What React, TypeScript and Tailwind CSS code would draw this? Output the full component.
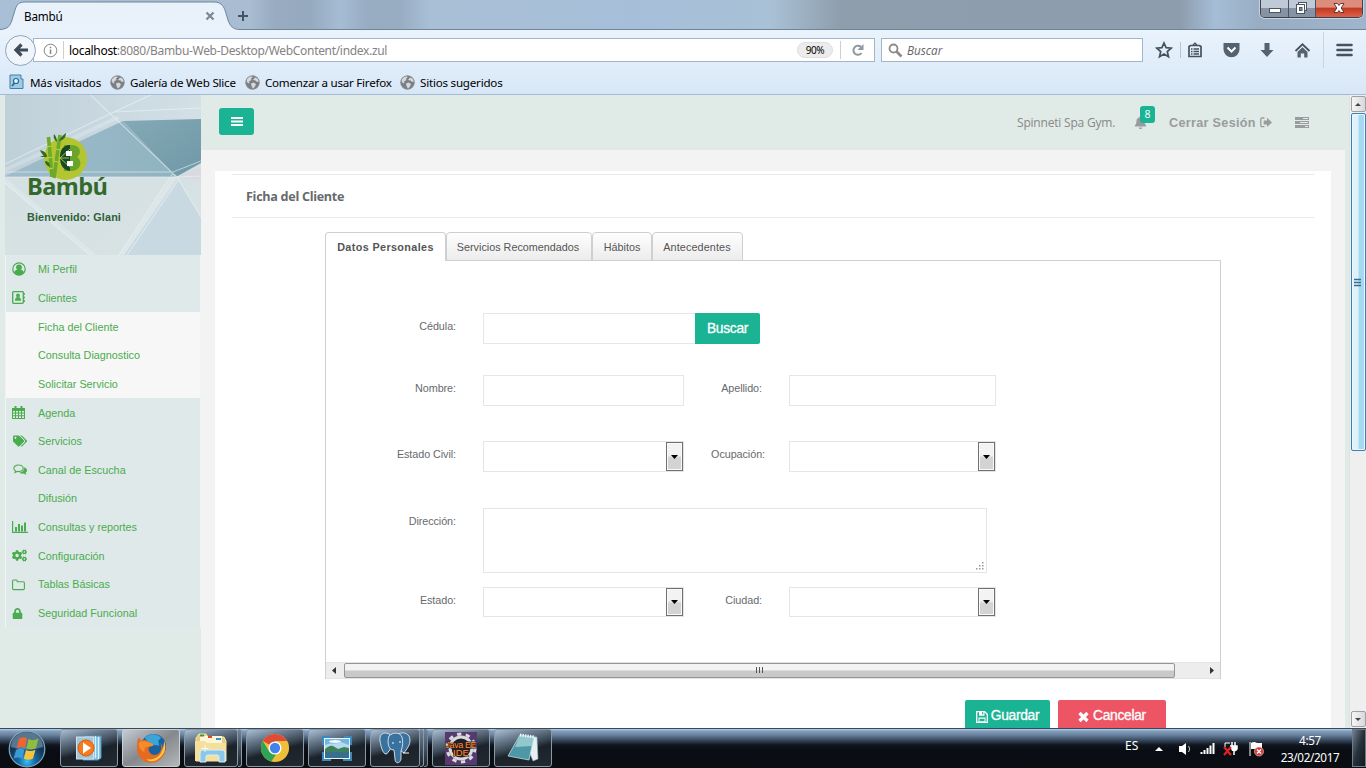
import React from "react";
import { FaBell, FaCogs, FaLock, FaTags } from "react-icons/fa";

const FORM_FONT = "font-['Liberation_Sans',Arial,sans-serif]";
const UI_FONT = "font-['Noto_Sans','Open_Sans',sans-serif]";

function Globe() {
  return (
    <svg width="15" height="15" viewBox="0 0 15 15" className="shrink-0">
      <circle cx="7.5" cy="7.5" r="7" fill="#7b7e82" />
      <path d="M1.5 6C2 3 4 1.5 6 1.2L8 2 6 3.5 6.5 5 4 6.5 4.5 8.5 2.8 8zM8 5l2-2.5 2.5 1L14 6.5l-2 .5-1.5-1.5zM6 8.5l2.500-1 2.500 1.500-1 2.500-2 2.300L6.500 11z" fill="#d5d8dc" />
      <circle cx="7.5" cy="7.5" r="6.8" fill="none" stroke="#8f9398" strokeWidth=".6" />
    </svg>
  );
}

function WindowButtons() {
  return (
    <div className="flex h-[18px] w-[103px] self-start overflow-hidden rounded-b-[5px] border border-t-0 border-[#39424f] shadow-[0_0_0_1px_#c6d2de]">
      <div className="flex w-[28px] items-center justify-center border-r border-[#4a5360] bg-linear-to-b from-[#c0cad6] from-45% to-[#8593a5] to-50%">
        <svg width="14" height="14"><rect x="1.5" y="6.5" width="11" height="4" fill="#fff" stroke="#4b5462" /></svg>
      </div>
      <div className="flex w-[27px] items-center justify-center border-r border-[#4a5360] bg-linear-to-b from-[#c0cad6] from-45% to-[#8593a5] to-50%">
        <svg width="14" height="14" fill="none" className="-mt-[2px]">
          <rect x="3.500" y="1.500" width="8" height="8" fill="#fff" stroke="#4b5462" />
          <rect x="1.500" y="3.500" width="8" height="9" fill="#fff" stroke="#4b5462" />
          <rect x="4.500" y="6.500" width="2.500" height="3" fill="#8593a5" stroke="#4b5462" />
        </svg>
      </div>
      <div className="flex flex-1 items-center justify-center bg-linear-to-b from-[#dc8d7c] from-40% via-[#c23a22] via-50% to-[#dd6048]">
        <svg width="14" height="14" viewBox="0 0 14 14" className="-mt-px">
          <path d="M2 2.500h3.500L7 4.500l1.500-2H12L9.200 7l2.800 4.500H8.500L7 9.500l-1.500 2H2L4.800 7z" fill="#fff" stroke="#5b3a3a" />
        </svg>
      </div>
    </div>
  );
}

function TabStrip() {
  return (
    <div className="relative flex h-[30px] shrink-0 justify-end bg-[linear-gradient(90deg,#a8bfd6_0,#a8bdd2_250px,#98abc0_275px,#96aabf_310px,#a5bcd4_340px,#97abc1_370px,#98adc2_400px,#a9bfd6_430px,#a6bed8_640px,#a9c1d6_770px,#8f9ead_840px,#8e9dae_1180px,#a5bdd6_1215px,#98adc2_1260px,#9fb5cd_1366px)] pr-[3px]">
      <svg width="260" height="30" viewBox="0 0 260 30" className="absolute left-0 top-0">
        <path d="M0 30V29.500C8 29 10 26 12 20L15 10C17 4 19 2 25 2H214C220 2 223 5 225 10L228 20C230 26 233 29.500 240 29.500V30z" fill="#e9f2fb" />
        <path d="M0 29.500C8 29 10 26 12 20L15 10C17 4 19 2 25 2H214C220 2 223 5 225 10L228 20C230 26 233 29.500 240 29.500H260" fill="none" stroke="#6f8699" />
        <path d="M206.500 12.500l7 7m0-7l-7 7" stroke="#7c8793" strokeWidth="2.200" />
        <path d="M238 16h10M243 11v10" stroke="#45525f" strokeWidth="2" />
      </svg>
      <span className={`absolute left-[24px] top-[7px] text-[11.700px] leading-[18px] tracking-[-0.200px] text-black ${UI_FONT}`}>Bambú</span>
      <div className="absolute bottom-0 left-[240px] right-0 h-px bg-[#6f8699]" />
      <WindowButtons />
    </div>
  );
}

function Toolbar() {
  return (
    <div className={`flex h-[40px] shrink-0 items-center pl-[5px] ${UI_FONT}`}>
      <div className="z-10 flex h-[31px] w-[31px] shrink-0 items-center justify-center rounded-full border border-[#8ea4ba] bg-[#eff5fb]">
        <svg width="16" height="16" viewBox="0 0 16 16"><path d="M8.500 2.500L3 8l5.500 5.500M3 8h12" stroke="#3f4b57" strokeWidth="3.200" fill="none" /></svg>
      </div>
      <div className="-ml-[3px] flex h-[24px] w-[842px] items-center border border-[#a3b6c9] bg-white pl-[9px]">
        <svg width="15" height="15" viewBox="0 0 15 15" className="shrink-0"><circle cx="7.500" cy="7.500" r="6.300" fill="none" stroke="#858585" /><path d="M7.500 6.500v4.500M7.500 3.700v1.500" stroke="#858585" strokeWidth="1.500" /></svg>
        <div className="mx-[5px] h-[18px] w-px bg-[#cfcfcf]" />
        <span className="pt-[2px] text-[12px] leading-[18px] tracking-[-0.320px] text-[#838383]"><span className="text-black">localhost</span>:8080/Bambu-Web-Desktop/WebContent/index.zul</span>
        <span className="ml-auto mr-[-1px] flex h-[16px] w-[36px] items-center justify-center rounded-full border border-[#dedede] bg-[#ececec] text-[10px] tracking-[-0.400px]">90%</span>
        <div className="ml-[8px] h-[18px] w-px bg-[#cfcfcf]" />
        <svg width="14" height="14" viewBox="0 0 14 14" className="ml-[10px] mr-[9px]"><path d="M10.500 10A4.500 4.500 0 1 1 10 4" fill="none" stroke="#8d98a3" strokeWidth="2" /><path d="M12.500 1v6h-6z" fill="#8d98a3" /></svg>
      </div>
      <div className="ml-[6px] flex h-[24px] w-[262px] items-center border border-[#a3b6c9] bg-white pl-[6px]">
        <svg width="15" height="15" viewBox="0 0 15 15"><circle cx="5.500" cy="5.500" r="4" fill="none" stroke="#8b8b8b" strokeWidth="1.800" /><path d="M8.500 8.500l5 5" stroke="#8b8b8b" strokeWidth="2.600" /></svg>
        <span className="ml-[4px] pt-[2px] font-['Open_Sans','Noto_Sans',sans-serif] text-[11.700px] italic text-[#666]">Buscar</span>
      </div>
      <svg width="18" height="18" viewBox="0 0 18 18" className="ml-[12px]"><path d="M9 2l2.100 4.700 5 .5-3.800 3.400 1.200 5.100L9 13l-4.500 2.700 1.200-5.100L1.900 7.200l5-.5z" fill="none" stroke="#45525f" strokeWidth="1.700" /></svg>
      <div className="ml-[7px] h-[16px] w-px bg-[#b5c4d4]" />
      <svg width="16" height="16" viewBox="0 0 16 16" className="ml-[6px]"><path d="M2 4.500l1.500-1h9L14 4.500V14.500H2z" fill="none" stroke="#45525f" strokeWidth="1.700" /><path d="M6 3L8 1.200 10 3M4 7h1.500m1 0H12M4 9.500h1.500m1 0H12M4 12h1.500m1 0H12" fill="none" stroke="#45525f" strokeWidth="1.300" /></svg>
      <svg width="17" height="16" viewBox="0 0 17 16" className="ml-[20px]"><path d="M.5 1h16v6.500a8 7.800 0 0 1-16 0z" fill="#55626f" /><path d="M4.500 5.500l4 4 4-4" fill="none" stroke="#fff" strokeWidth="2" /></svg>
      <svg width="16" height="16" viewBox="0 0 16 16" className="ml-[19px]"><path d="M5.500 1h5v7h4L8 15 1.500 8h4z" fill="#55626f" /></svg>
      <svg width="17" height="16" viewBox="0 0 17 16" className="ml-[19px]"><path d="M1.500 9l7-6.700 7 6.700" fill="none" stroke="#45525f" strokeWidth="1.800" /><path d="M3.500 10l5-4.800 5 4.800v5.500h-3.300v-4H6.800v4H3.500z" fill="#55626f" /></svg>
      <div className="ml-[12px] h-[36px] w-px bg-[#c7d5e5]" />
      <svg width="17" height="16" viewBox="0 0 17 16" className="ml-[12px]"><path d="M1.500 3h14M1.500 8h14M1.500 13h14" stroke="#45525f" strokeWidth="2.600" strokeLinecap="round" /></svg>
    </div>
  );
}

function Bookmarks() {
  return (
    <div className={`flex flex-1 items-center pl-[9px] text-[11.600px] leading-[18px] text-black ${UI_FONT}`}>
      <svg width="16" height="16" viewBox="0 0 16 16" className="mr-[5px]"><path d="M1 1h11v4h2v9.500H1z" fill="#9ecbe5" stroke="#467fa5" /><circle cx="7" cy="7" r="2.500" fill="#e8f6ff" stroke="#286993" strokeWidth="1.200" /><path d="M5.500 9L3 12" stroke="#286993" strokeWidth="1.800" /></svg>
      <span className="w-[80px] whitespace-nowrap pt-[2px] tracking-[-0.180px]">Más visitados</span>
      <Globe />
      <span className="ml-[4px] w-[116px] whitespace-nowrap pt-[2px] pl-px tracking-[-0.220px]">Galería de Web Slice</span>
      <Globe />
      <span className="ml-[5px] w-[135px] whitespace-nowrap pt-[2px] tracking-[-0.240px]">Comenzar a usar Firefox</span>
      <Globe />
      <span className="ml-[5px] whitespace-nowrap pt-[2px] tracking-[-0.220px]">Sitios sugeridos</span>
    </div>
  );
}

const menuIcons: Record<string, React.ReactNode> = {
  perfil: <svg width="14" height="14" viewBox="0 0 14 14"><circle cx="7" cy="7" r="6.200" fill="none" stroke="currentColor" strokeWidth="1.200" /><circle cx="7" cy="5.300" r="2.900" fill="currentColor" /><path d="M2 10.500C2.700 8.500 4 8 5 7.800h4c1 .2 2.300.7 3 2.700A6 6 0 0 1 2 10.500z" fill="currentColor" /></svg>,
  clientes: <svg width="14" height="13" viewBox="0 0 14 13"><rect x=".7" y=".7" width="10.600" height="11.600" rx=".8" fill="none" stroke="currentColor" strokeWidth="1.300" /><circle cx="6" cy="4.500" r="1.900" fill="currentColor" /><path d="M3 9.800c0-2 .8-3.500 2-3.500h2c1.200 0 2 1.500 2 3.500z" fill="currentColor" /><path d="M12.300 2v2m0 1.500v2m0 1.500v2" stroke="currentColor" /></svg>,
  agenda: <svg width="13" height="13" viewBox="0 0 13 13"><path d="M0 2h13v11H0z" fill="currentColor" /><path d="M1 5h2v1.600H1zM4 5h2v1.600H4zM7 5h2v1.600H7zM10 5h2v1.600h-2zM1 7.600h2v1.600H1zM4 7.600h2v1.600H4zM7 7.600h2v1.600H7zM10 7.600h2v1.600h-2zM1 10.200h2V12H1zM4 10.200h2V12H4zM7 10.200h2V12H7zM10 10.200h2V12h-2z" fill="#e1eaea" /><path d="M3.500 0v3.500M9.500 0v3.500" stroke="currentColor" strokeWidth="2" /></svg>,
  servicios: <FaTags size={14} className="ml-px" />,
  canal: <svg width="14" height="12" viewBox="0 0 14 12" className="ml-px"><path d="M5.500 1C2.800 1 .8 2.400.8 4.300c0 1.100.7 2 1.700 2.600L2 8.500l2.300-1.100 1.200.1c2.700 0 4.700-1.400 4.700-3.200S8.200 1 5.500 1z" fill="none" stroke="currentColor" strokeWidth="1.100" /><path d="M11.300 3.200C13 3.800 14 5 14 6.300c0 1-.5 1.900-1.500 2.600l1 2-3-1.300c-1.800.2-3.600-.2-4.700-1 3.500 0 5.700-2.100 5.500-5.400z" fill="currentColor" /></svg>,
  reportes: <svg width="16" height="12" viewBox="0 0 16 12"><path d="M.6 0v11.400H16" fill="none" stroke="currentColor" strokeWidth="1.200" /><path d="M4 6v4.500M7 3v7.500M10 4.500v6M13 1.500v9" stroke="currentColor" strokeWidth="2" /></svg>,
  config: <FaCogs size={15} />,
  tablas: <svg width="13" height="12" viewBox="0 0 13 12"><path d="M.6 2.200Q.6 1 1.800 1h2.400q1 0 1 1v.7h6q1.200 0 1.200 1.200v5.500q0 1.200-1.200 1.200H1.800q-1.200 0-1.200-1.200z" fill="none" stroke="currentColor" strokeWidth="1.100" /></svg>,
  seguridad: <FaLock size={11} />,
};

const menu = [
  { label: "Mi Perfil", icon: "perfil" },
  { label: "Clientes", icon: "clientes" },
  { label: "Ficha del Cliente", sub: true },
  { label: "Consulta Diagnostico", sub: true },
  { label: "Solicitar Servicio", sub: true },
  { label: "Agenda", icon: "agenda" },
  { label: "Servicios", icon: "servicios" },
  { label: "Canal de Escucha", icon: "canal" },
  { label: "Difusión" },
  { label: "Consultas y reportes", icon: "reportes" },
  { label: "Configuración", icon: "config" },
  { label: "Tablas Básicas", icon: "tablas" },
  { label: "Seguridad Funcional", icon: "seguridad" },
];

function SidebarArt() {
  return (
    <svg width="196" height="160" viewBox="0 0 196 160" className="absolute inset-0">
      <defs>
        <linearGradient id="sky" x1="0" y1="0" x2="1" y2="0"><stop offset="0" stopColor="#bfd0d9" /><stop offset="1" stopColor="#d3e0e6" /></linearGradient>
        <linearGradient id="band" x1="0" y1="0" x2="1" y2="0"><stop offset="0" stopColor="#9fbccb" /><stop offset="1" stopColor="#8fb3c0" /></linearGradient>
        <linearGradient id="deep" x1="0" y1="0" x2="1" y2="1"><stop offset="0" stopColor="#85a9b6" /><stop offset="1" stopColor="#6f98a6" /></linearGradient>
        <linearGradient id="low" x1="0" y1="0" x2="1" y2="1"><stop offset="0" stopColor="#c6d7de" /><stop offset="1" stopColor="#dbe4e6" /></linearGradient>
      </defs>
      <rect width="196" height="160" fill="url(#low)" />
      <path d="M0 0h196v25L118 26 0 81z" fill="url(#sky)" />
      <path d="M0 81L118 26l53 56H0z" fill="url(#band)" />
      <path d="M118 26l78-2v44l-25 14z" fill="url(#deep)" />
      <path d="M173 84l23 38v38h-77z" fill="#c9d9e1" />
      <path d="M0 82h173l-54 78H0z" fill="#d7e1e3" opacity=".75" />
      <path d="M171 82l25-10v13z" fill="#d9d9e0" />
      <g fill="none" stroke="#eff7fa">
        <path d="M75-10l97 92L196 122M0 69L109 17L150-2M109 17l87-4M0 77h168l28-11M0 82h170l26-1M168 78l-54 82M174 84l-52 76M0 88l85 72" strokeWidth="1.100" opacity=".55" />
        <path d="M171 80l-54 80M0 85l89 75M0 75L114 22" strokeWidth="4" opacity=".25" />
      </g>
    </svg>
  );
}

function Sidebar() {
  return (
    <div className={`ml-[5px] w-[196px] shrink-0 ${FORM_FONT}`}>
      <div className="relative flex h-[160px] flex-col pl-[22px] pt-[38px]">
        <SidebarArt />
        <svg width="48" height="47" viewBox="0 0 48 47" className="relative ml-[13px] h-[47px] shrink-0">
          <circle cx="25.500" cy="25.500" r="21.500" fill="#b3c632" />
          <path d="M24 12h8c9 0 10 9 5 12 6 4 4 14-6 14h-7z" fill="#6aa42b" />
          <path d="M30 12c-7 0-10 5-10 12 0 8 3 13 10 14z" fill="#184b25" />
          <path d="M20 25l10-9M20 25l10 9M20 25h9" stroke="#c6d95a" strokeWidth=".8" />
          <path d="M26 18h6v5h-6zM27 28h6v5h-6z" fill="#fff" />
          <path d="M8.500 4l3.500 40M20 2l-6 43" stroke="#6da92a" strokeWidth="3.600" />
          <path d="M7 14l4-1M8 25l4-1M9 36l4-1M16 16l4 1M14 28l4 1" stroke="#bfd83c" />
          <path d="M19 8c1-3 4-6 7-8 0 4-2 7-7 8zM7 24c-4-1-6-4-7-7 4 1 7 3 7 7zM7 24H0l5-2zM10 34c-3-1-5-3-5-6 3 0 5 2 5 6zM17 9c-3-2-4-5-3-8 2 2 3 5 3 8z" fill="#326b27" />
        </svg>
        <div className="relative -mt-[10px] h-[33px] whitespace-nowrap font-['Open_Sans','Noto_Sans',sans-serif] text-[23.500px] font-bold leading-[33px] tracking-[-0.600px] text-[#336a2c]">Bambú</div>
        <div className="relative mt-[8px] whitespace-nowrap text-[10.800px] font-bold leading-[13px] tracking-[0.130px] text-[#315f38]">Bienvenido: Glani</div>
      </div>
      <div className="border-x border-[#f0f3f3]">
        {menu.map((item) => (
          <div key={item.label} className={`flex h-[28.670px] items-center pl-[6px] text-[10.800px] text-[#49ac4d] ${item.sub ? "bg-[#f7f7f7]" : "bg-[#e0e9ea]"}`}>
            <span className="w-[26px] shrink-0">{item.icon ? menuIcons[item.icon] : null}</span>
            <span className="whitespace-nowrap">{item.label}</span>
          </div>
        ))}
      </div>
    </div>
  );
}

function TopBar() {
  return (
    <div className="flex h-[55px] shrink-0 bg-[#e0eae6] pl-[18px]">
      <button className="mt-[13px] flex h-[27px] w-[35px] items-center justify-center rounded-[3px] bg-[#1ab394]">
        <svg width="12" height="9"><path d="M0 0h12v2H0zM0 3.500h12v2H0zM0 7h12v2H0z" fill="#fff" /></svg>
      </button>
      <div className="ml-auto flex h-[55px] items-center text-[#999c9e]">
        <span className="w-[117px] whitespace-nowrap pt-px font-['Open_Sans','Noto_Sans',sans-serif] text-[12px] tracking-[-0.200px] text-[#888]">Spinneti Spa Gym.</span>
        <span className="relative w-[35px]">
          <FaBell size={13} />
          <span className="absolute left-[6px] top-[-10px] flex h-[17px] w-[15px] items-center justify-center rounded-[3px] bg-[#1ab394] font-['Open_Sans','Noto_Sans',sans-serif] text-[10.500px] text-white">8</span>
        </span>
        <span className={`w-[91px] whitespace-nowrap pt-px text-[12.600px] font-bold tracking-[0.330px] ${FORM_FONT}`}>Cerrar Sesión</span>
        <svg width="12" height="11" viewBox="0 0 12 11"><path d="M4.500 1H2a1.200 1.200 0 0 0-1.200 1.200v6.300A1.200 1.200 0 0 0 2 9.700h2.500" fill="none" stroke="currentColor" strokeWidth="1.300" /><path d="M3.700 3.400h3.300V.8L12 5.400 7 10V7.400H3.700z" fill="currentColor" /></svg>
        <svg width="14" height="11" viewBox="0 0 14 11" className="ml-[23px] mr-[36px]"><path d="M0 0h14v3H0zM0 4h14v3H0zM0 8h14v3H0z" fill="currentColor" /><path d="M8 1h5v1H8zM5 5h8v1H5zM10 9h3v1h-3z" fill="#e0eae6" /></svg>
      </div>
    </div>
  );
}

const Label = ({ text, className }: { text: string; className: string }) => (
  <span className={`mt-[6px] shrink-0 whitespace-nowrap text-right text-[10.800px] leading-[14px] tracking-[-0.070px] text-[#676a6c] ${className}`}>{text}</span>
);

function Combo({ className }: { className: string }) {
  return (
    <div className={`flex shrink-0 justify-end border border-[#e3e5e7] bg-white ${className}`}>
      <div className="flex w-[17px] items-center justify-center border border-[#707070] bg-linear-to-b from-[#f3f3f3] from-45% to-[#d3d3d3] to-55% shadow-[inset_0_0_0_1px_#fafafa]">
        <svg width="7" height="4"><path d="M0 0h7L3.500 4z" fill="#000" /></svg>
      </div>
    </div>
  );
}

function FormPanel() {
  return (
    <div className={`ml-[110px] mt-[14px] w-[896px] ${FORM_FONT}`}>
      <div className="relative z-10 -mb-px flex h-[29px] text-[10.800px] text-[#555]">
        <div className="flex w-[121px] items-center justify-center rounded-t-[4px] border border-b-0 border-[#cfcfcf] bg-white pt-[1px] font-bold tracking-[0.380px]">Datos Personales</div>
        <div className="flex w-[146px] items-center justify-center rounded-t-[4px] border border-[#cfcfcf] bg-linear-to-b from-[#fefefe] to-[#ececec] pr-[2px] pt-[1px]">Servicios Recomendados</div>
        <div className="flex w-[60px] items-center justify-center rounded-t-[4px] border border-[#cfcfcf] bg-linear-to-b from-[#fefefe] to-[#ececec] pt-[1px]">Hábitos</div>
        <div className="flex w-[91px] items-center justify-center rounded-t-[4px] border border-[#cfcfcf] bg-linear-to-b from-[#fefefe] to-[#ececec] pr-[1px] pt-[1px] tracking-[0.120px]">Antecedentes</div>
      </div>
      <div className="flex h-[419px] flex-col border border-b-0 border-[#cfcfcf] pt-[52px]">
        <div className="flex h-[62px]">
          <Label text="Cédula:" className="w-[130px]" />
          <input className="ml-[27px] h-[31px] w-[212px] border border-r-0 border-[#e5e6e7]" />
          <button className="h-[31px] w-[65px] rounded-r-[2px] bg-[#1ab394] pt-[2px] text-[13.800px] tracking-[-0.300px] text-white [-webkit-text-stroke:0.300px_white]">Buscar</button>
        </div>
        <div className="flex h-[66px]">
          <Label text="Nombre:" className="w-[130px]" />
          <input className="ml-[27px] h-[31px] w-[201px] border border-[#e5e6e7]" />
          <Label text="Apellido:" className="w-[78px]" />
          <input className="ml-[27px] h-[31px] w-[207px] border border-[#e5e6e7]" />
        </div>
        <div className="flex h-[67px]">
          <Label text="Estado Civil:" className="w-[130px]" />
          <Combo className="ml-[27px] h-[31px] w-[201px]" />
          <Label text="Ocupación:" className="w-[81px]" />
          <Combo className="ml-[24px] h-[31px] w-[207px]" />
        </div>
        <div className="flex h-[79px]">
          <Label text="Dirección:" className="w-[130px]" />
          <div className="ml-[27px] flex h-[65px] w-[504px] items-end justify-end border border-[#e3e5e7] p-px">
            <svg width="9" height="9" fill="#999"><path d="M6 0h1.500v1.500H6zM6 3h1.500v1.500H6zM3 3h1.500v1.500H3zM0 6h1.500v1.500H0zM3 6h1.500v1.500H3zM6 6h1.500v1.500H6z" /></svg>
          </div>
        </div>
        <div className="flex h-[30px]">
          <Label text="Estado:" className="w-[130px]" />
          <Combo className="ml-[27px] h-[30px] w-[201px]" />
          <Label text="Ciudad:" className="w-[78px]" />
          <Combo className="ml-[27px] h-[30px] w-[207px]" />
        </div>
        <div className="mt-auto flex h-[17px] items-center border-y border-[#e3e3e3] bg-[#ededed]">
          <svg width="18" height="9"><path d="M10 1v7L6 4.500z" fill="#333" /></svg>
          <div className="flex h-[15px] w-[831px] items-center justify-center rounded-[2px] border border-[#959595] bg-linear-to-b from-[#f3f3f3] from-45% to-[#c9c9cb] to-55%">
            <svg width="9" height="7"><path d="M1.500 0v6M4.500 0v6M7.500 0v6" stroke="#555" /></svg>
          </div>
          <svg width="9" height="9" className="ml-auto mr-[3px]"><path d="M2 1v7l4-3.500z" fill="#333" /></svg>
        </div>
      </div>
    </div>
  );
}

function VerticalScroll() {
  return (
    <div className="flex w-[17px] shrink-0 flex-col items-center border-l border-[#e2e2e2] bg-[#efefef] pt-px">
      <div className="flex h-[16px] w-[15px] items-center justify-center rounded-[2px] border border-[#a0a0a0] bg-linear-to-r from-[#f6f6f6] to-[#d8d8db]"><svg width="8" height="5"><path d="M1 4h6L4 1z" fill="#444" /></svg></div>
      <div className="mt-px flex h-[338px] w-[15px] items-center justify-center rounded-[2px] border border-[#3c7fb1] bg-linear-to-r from-[#dff2fc] from-45% to-[#a7d8f2] to-55% shadow-[inset_0_0_0_1px_#eaf8ff]"><svg width="8" height="9"><path d="M0 1.500h7M0 4.500h7M0 7.500h7" stroke="#3b6c8c" strokeWidth="1.300" /></svg></div>
      <div className="mb-[1px] mt-auto flex h-[16px] w-[15px] items-center justify-center rounded-[2px] border border-[#a0a0a0] bg-linear-to-r from-[#f6f6f6] to-[#d8d8db]"><svg width="8" height="5"><path d="M1 1h6L4 4z" fill="#444" /></svg></div>
    </div>
  );
}

const MediaIcon = () => (
  <svg width="30" height="28" viewBox="0 0 30 28"><path d="M10 2h17v22l-3 2H9z" fill="#8dc5e2" stroke="#4c94bd" /><path d="M21.500 2v22M24.500 3v22" stroke="#d9f2ff" /><rect x="2.500" y="3" width="17" height="22" fill="#a5c4d8" stroke="#c9e5f3" /><circle cx="12" cy="14" r="8" fill="#f47b20" stroke="#d75e12" /><path d="M9 8.500v11l8-5.500z" fill="#fff" /></svg>
);
const FirefoxIcon = () => (
  <svg width="31" height="31" viewBox="0 0 32 32"><circle cx="18" cy="14" r="13" fill="#1763a2" /><path d="M9 5c5-5 12-5 17 0l-3 3 1 5-7-1-4-2z" fill="#3aa5d8" /><path d="M29 8c4 9 0 19-9 22C10 33 1 26 1 16c0-5 0-8 2-12l2 4c3-2 6-1 9 2 2 0 4 1 4 3l-5 2v3c3 7 10 5 12 1 2-3 1-7 0-9 3 3 3 6 2 9 3-4 3-8 2-11z" fill="#e56a22" /><path d="M29 8c3 8 0 16-8 20-4 2-8 1-11-1 7 1 13-1 16-7 2-4 3-8 3-12z" fill="#fbc743" /><path d="M3 10c3-2 7-2 11 0 2 0 4 1 4 3l-5 1c-4 0-5 3-4 6-4-2-7-6-6-10z" fill="#f48c2c" /></svg>
);
const FolderIcon = () => (
  <svg width="34" height="30" viewBox="0 0 34 30"><path d="M2 5l3-4h7l2 3h16l2 4v20H2z" fill="#e8cc79" stroke="#f9e5a3" /><path d="M6 3h22v8H6z" fill="#fff6d6" /><path d="M6 1.500h4v2H6z" fill="#2d9b50" /><path d="M14 3h4v2h-4z" fill="#e74130" /><path d="M22 5h5v2h-5z" fill="#2e93d1" /><path d="M1 8h10l2 2h19v18H1z" fill="#f5df9d" /><path d="M6 29V20q0-3 3-3h19q3 0 3 3v9h-6v-5q0-2-2-2h-9q-2 0-2 2v5z" fill="#8cc6e8" stroke="#d5effd" /><path d="M11 12v7M7.500 15.500h7" stroke="#fff" strokeWidth=".8" /></svg>
);
const ChromeIcon = () => (
  <svg width="30" height="30" viewBox="0 0 32 32"><circle cx="16" cy="16" r="15" fill="#efbf3a" /><path d="M16 16L3 8.500A15 15 0 0 1 29 8.500H16z" fill="#df4b37" /><path d="M3 8.500L10 20l7 3-5 7.500A15 15 0 0 1 3 8.500z" fill="#2fa454" /><circle cx="16" cy="16" r="7" fill="#fff" /><circle cx="16" cy="16" r="5.500" fill="#4282ea" /></svg>
);
const PictureIcon = () => (
  <svg width="32" height="27" viewBox="0 0 32 27"><path d="M1 1h8v3H4v6H1zM23 1h8v9h-3V4h-5zM1 17h3v6h6v3H1zM28 17h3v9h-9v-3h6z" fill="#398ac2" /><rect x="3.500" y="3.500" width="25" height="20" fill="#2e87bc" stroke="#ecf4f6" /><path d="M4 4h24v10H4z" fill="#73b7e1" /><path d="M4 10c5-3 11 0 16-3l8 3v4H4z" fill="#b5d9ee" /><path d="M4 14c3-2 5-4 8-3l5 3 6-2 5 1v5H4z" fill="#3e7f5e" /><path d="M4 17h24v6H4z" fill="#376f8d" /><ellipse cx="14" cy="6.500" rx="6" ry="1.500" fill="#f4fbff" /></svg>
);
const ElephantIcon = () => (
  <svg width="32" height="32" viewBox="0 0 32 32"><g fill="#39719f" stroke="#e1e8ed" strokeWidth=".9"><path d="M10 2C4-1 0 3 1 9c1 6 3 13 6 13 2 0 2-3 4-4L14 4z" /><path d="M19 2c6-3 12 0 12 6 0 5-3 9-6 13l-6-4z" /><path d="M10 4c4-4 11-4 13 1 1 4 1 9-1 14v8c-1 5-6 5-6 0l-1-9c-6 0-7-8-5-14z" /></g><path d="M13 11h2M20 10h2M24 21h6" stroke="#fff" /></svg>
);
const JavaIcon = () => (
  <svg width="34" height="33" viewBox="0 0 34 33"><rect x="1" width="32" height="33" fill="#55396f" /><circle cx="17" cy="16" r="11" fill="#211e2c" stroke="#d9d9d9" strokeWidth="3" /><circle cx="17" cy="16" r="14" fill="none" stroke="#d9d9d9" strokeWidth="3" strokeDasharray="4.300 4.500" /><g fill="#ff8d23" stroke="#2b1b24" strokeWidth="1.200" paintOrder="stroke" fontFamily="Liberation Sans, sans-serif" textAnchor="middle"><text x="17" y="15.500" fontSize="9" textLength="31">Java EE</text><text x="17" y="24" fontSize="9.500">IDE</text></g></svg>
);
const NotepadIcon = () => (
  <svg width="32" height="30" viewBox="0 0 32 30"><path d="M16 3l14 1 1 22-5 2z" fill="#e8eff2" stroke="#86afba" strokeWidth=".6" /><path d="M13 2l14 2-5 23L1 23z" fill="#4d97a6" stroke="#c8eef0" strokeWidth=".7" /><path d="M13 2l14 2-2 9-17 1z" fill="#b1dce0" opacity=".7" /><path d="M13 2l15 2" stroke="#f3f7fa" strokeWidth="3" strokeDasharray="1.300 1.200" /></svg>
);

const taskItems = [
  { id: "media", icon: <MediaIcon />, stack: 0 },
  { id: "firefox", icon: <FirefoxIcon />, stack: 0, active: true },
  { id: "files", icon: <FolderIcon />, stack: 1 },
  { id: "chrome", icon: <ChromeIcon />, stack: 0 },
  { id: "pictures", icon: <PictureIcon />, stack: 0 },
  { id: "postgres", icon: <ElephantIcon />, stack: 2 },
  { id: "java", icon: <JavaIcon />, stack: 0 },
  { id: "notes", icon: <NotepadIcon />, stack: 0 },
];

function Taskbar() {
  return (
    <div className={`flex h-[40px] shrink-0 border-t border-[#39485b] bg-[linear-gradient(180deg,#b8d0e9_0,#829fbd_2px,#6a829e_6px,#394b61_11px,#10161f_16px,#090d13_22px,#0a0e13_39px)] text-white ${UI_FONT}`}>
      <div className="flex w-[60px] shrink-0 items-center pl-[7px]">
        <svg width="40" height="38" viewBox="0 0 40 38">
          <defs><radialGradient id="orb" cx="50%" cy="85%"><stop offset="0" stopColor="#37c4f4" /><stop offset=".45" stopColor="#176ba8" /><stop offset="1" stopColor="#153856" /></radialGradient></defs>
          <circle cx="20" cy="19" r="17.800" fill="url(#orb)" stroke="#81a6be" strokeWidth="1.200" />
          <path d="M4 17A16 15 0 0 1 36 17Q20 22 4 17z" fill="#bed8e6" opacity=".4" />
          <path d="M12 9q4-3 8-.5L18 18q-4-2-8.500.5z" fill="#ee6532" />
          <path d="M21.500 9q4 2.500 10-.5L29 18q-4 2.500-9.500.5z" fill="#8ebf3c" />
          <path d="M9 20q4-2.500 8.500-.3l-2.300 9q-4-2.500-8.500 0z" fill="#3a9cd7" />
          <path d="M19 20q4 2.200 9.500-.2L26 28.500q-4 2.500-9.300.2z" fill="#f8c33a" />
        </svg>
      </div>
      <div className="flex gap-[4px]">
        {taskItems.map((item) => (
          <div key={item.id} className="flex h-[39px] w-[58px]">
            <div className={`flex h-[38px] min-w-0 flex-1 items-center justify-center rounded-[3px] border ${item.active ? "border-[#cbd0d4] bg-linear-to-br from-[#c4ccd3] via-[#85898d] to-[#b5b7b8]" : "border-[#8b98a6] bg-[linear-gradient(165deg,#a9bfd5_0,#718295_22%,#3b4855_45%,#1b222a_57%,#222a31_100%)]"}`}>{item.icon}</div>
            {item.stack > 0 && <div className="h-[38px] w-[4px] rounded-r-[3px] border-y border-r border-[#8b98a6] bg-linear-to-b from-[#71849a] to-[#1d252e]" />}
            {item.stack > 1 && <div className="h-[38px] w-[4px] rounded-r-[3px] border-y border-r border-[#76879a] bg-linear-to-b from-[#71849a] to-[#1d252e]" />}
          </div>
        ))}
      </div>
      <div className="ml-auto flex">
        <span className="ml-[3px] mt-[9px] w-[30px] text-[12px] leading-[16px]">ES</span>
        <svg width="9" height="6" className="mt-[17px]"><path d="M0 5h8L4 1z" fill="#fff" /></svg>
        <svg width="14" height="14" viewBox="0 0 14 14" className="ml-[14px] mt-[13px]"><path d="M1 4h3l4-3v12L4 10H1z" fill="#fff" /><path d="M10.500 4q2.500 3 0 6" fill="none" stroke="#bfc8ce" /></svg>
        <svg width="15" height="13" viewBox="0 0 15 13" className="ml-[8px] mt-[13px]"><path d="M1.500 10v2M4.500 8v4M7.500 6v6M10.500 3.500V12M13.500 1v11" stroke="#fff" strokeWidth="2" /></svg>
        <svg width="15" height="16" viewBox="0 0 15 16" className="ml-[8px] mt-[12px]"><path d="M7 2H2v4" fill="none" stroke="#fff" /><path d="M7 5h7v3q-1 2-3 2v4M9 5V1m3 4V1" fill="none" stroke="#fff" strokeWidth="1.500" /><path d="M7 5h7v3l-2 2H9z" fill="#fff" /><path d="M1 6l7 8M8 6l-7 8" stroke="#e32121" strokeWidth="2.200" /></svg>
        <svg width="16" height="16" viewBox="0 0 16 16" className="ml-[10px] mt-[12px]"><path d="M2 1v14" stroke="#fff" /><path d="M3 2q3-2 6 0h5v7q-3 1-6-1H3z" fill="#fff" /><circle cx="11" cy="10.500" r="4.500" fill="#d73636" stroke="#ffd6d0" strokeWidth=".6" /><path d="M9 8.500l4 4m0-4l-4 4" stroke="#fff" strokeWidth="1.500" /></svg>
        <div className="ml-[12px] mt-[3px] w-[68px] text-center text-[11.700px] leading-[17px] tracking-[-0.350px]"><div>4:57</div><div>23/02/2017</div></div>
        <div className="ml-[8px] h-[38px] w-[14px] border border-[#6f7b87] bg-linear-to-br from-[#71808d] via-[#26313b] to-[#121920]" />
      </div>
    </div>
  );
}

function SaveIcon() {
  return (
    <svg width="12" height="12" viewBox="0 0 12 12">
      <path d="M.7.7H8.700l2.600 2.600v8H.7z" fill="none" stroke="#fff" strokeWidth="1.300" />
      <path d="M3 1h5.500v3.700H3zM2.500 6.500h7V11h-7z" fill="#fff" />
      <path d="M6 1.300h1.300v2H6zM3.500 7.800h5v2.400h-5z" fill="#1ab394" />
    </svg>
  );
}

function CancelIcon() {
  return <svg width="11" height="12" viewBox="0 0 11 12" className="mr-[1px]"><path d="M1.500 2l8 8m0-8l-8 8" stroke="#fff" strokeWidth="3.200" /></svg>;
}

export default function App() {
  return (
    <div className="flex h-[768px] w-[1366px] flex-col overflow-hidden bg-white">
      <TabStrip />
      <div className="flex h-[65px] shrink-0 flex-col border-b border-[#a6bbd3] bg-linear-to-b from-[#eaf3fc] to-[#d8e7f7]">
        <Toolbar />
        <Bookmarks />
      </div>
      <div className="flex h-[633px] shrink-0 overflow-hidden bg-[#e0eae6]">
        <Sidebar />
        <div className="flex h-[633px] w-[1144px] shrink-0 flex-col overflow-hidden bg-[#f3f3f4]">
          <TopBar />
          <div className="ml-[14px] mt-[21px] h-[557px] w-[1116px] bg-white pt-[3px]">
            <div className="ml-[17px] flex h-[44px] w-[1082px] items-center border-y border-[#e7eaec] pl-[14px] pt-[2px] font-['Open_Sans','Noto_Sans',sans-serif] text-[12.600px] font-bold tracking-[-0.300px] text-[#676a6c]">Ficha del Cliente</div>
            <FormPanel />
            <div className={`mr-[165px] mt-[21px] flex justify-end gap-[8px] text-[13.800px] tracking-[-0.300px] text-white [-webkit-text-stroke:0.300px_white] ${FORM_FONT}`}>
              <button className="flex h-[31px] w-[85px] items-center justify-center gap-[3px] rounded-[2px] bg-[#1ab394] pt-[2px]"><SaveIcon />Guardar</button>
              <button className="flex h-[31px] w-[108px] items-center justify-center gap-[3px] rounded-[2px] bg-[#ed5565] pt-[2px]"><CancelIcon />Cancelar</button>
            </div>
          </div>
        </div>
        <div className="ml-auto flex"><VerticalScroll /></div>
      </div>
      <Taskbar />
    </div>
  );
}
